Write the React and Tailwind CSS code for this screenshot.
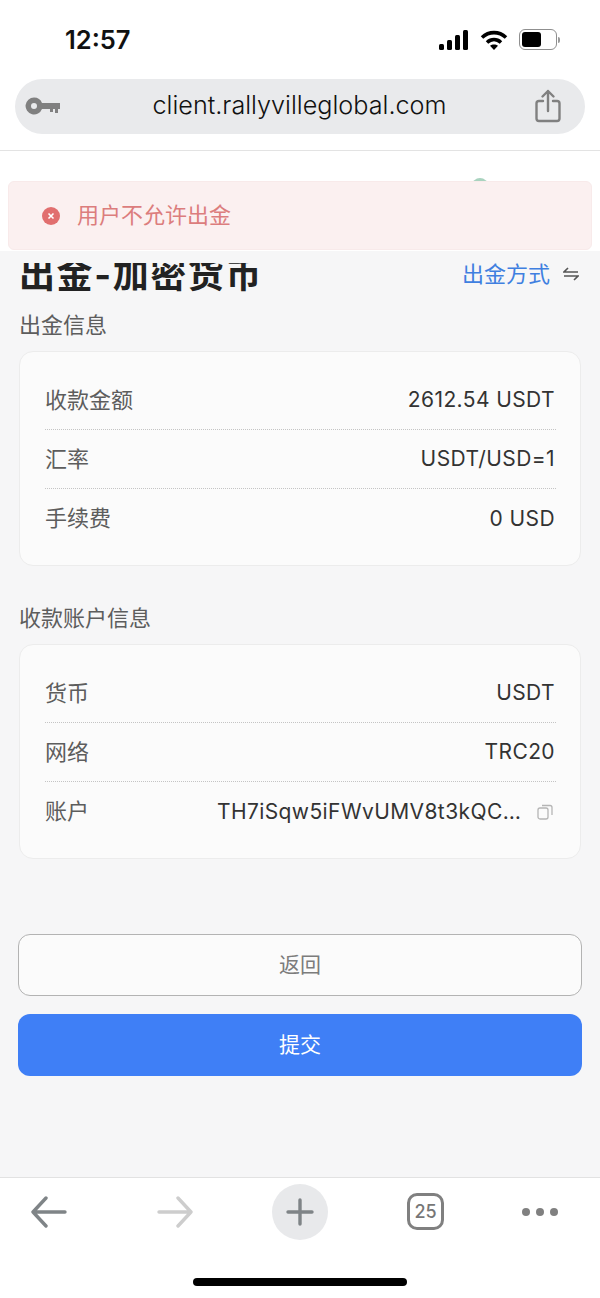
const cjk = { fontFamily: '"Inter", "Noto Sans CJK SC", sans-serif' };

function Row({ label, value, last }) {
  return (
    <div className={`flex h-[59px] items-center justify-between border-dotted border-[#c4c4c4] ${last ? '' : 'border-b'}`}>
      <span className="text-[22px] text-[#5d5d5d]">{label}</span>
      <span className="pr-[1px] text-[21px] tracking-[0.4px] text-[#333]">{value}</span>
    </div>
  );
}

function Card({ children }) {
  return (
    <div className="mt-[10px] rounded-[14px] border border-[#ececec] bg-[#fbfbfb] pl-[25px] pr-[24px] pt-[19px] pb-[17px]">
      {children}
    </div>
  );
}

function StatusBar() {
  return (
    <div className="flex h-[79px] items-start justify-between pl-[65px] pr-[40px] pt-[24px]">
      <span className="text-[25.5px] leading-[32px] font-semibold text-[#111]" style={{ fontFamily: 'Inter, sans-serif' }}>12:57</span>
      <div className="flex items-center gap-[11px] pt-[5px]">
        <svg width="30" height="20" viewBox="0 0 30 20" fill="#000">
          <rect x="0" y="14" width="5" height="6" rx="1.5" />
          <rect x="8" y="10" width="5" height="10" rx="1.5" />
          <rect x="16" y="5" width="5" height="15" rx="1.5" />
          <rect x="24" y="0" width="5" height="20" rx="1.5" />
        </svg>
        <svg width="28" height="20" viewBox="0 0 28 20" fill="none" stroke="#000" strokeWidth="3.6">
          <path d="M2 7.500C9 1 19 1 26 7.500" />
          <path d="M7 12.500c4.200-3.800 9.800-3.800 14 0" />
          <path d="M14 20l-4-4.200c2.200-1.900 5.800-1.900 8 0z" fill="#000" stroke="none" />
        </svg>
        <div className="flex items-center">
          <div className="h-[21px] w-[38px] rounded-[6px] border border-[#8f8f8f] p-[2px]">
            <div className="h-full w-[19px] rounded-[3px] bg-black" />
          </div>
          <div className="ml-[1px] h-[6px] w-[2px] rounded-r bg-[#9a9a9a]" />
        </div>
      </div>
    </div>
  );
}

function AddressBar() {
  return (
    <div className="h-[72px] border-b border-[#e3e3e3]">
      <div className="mx-[15px] flex h-[55px] items-center justify-between rounded-[28px] bg-[#e9eaec] pb-[1px] pl-[10px] pr-[24px]">
        <svg width="36" height="18" viewBox="0 0 36 18" fill="#808080">
          <path fillRule="evenodd" d="M9 0.500a8.500 8.500 0 0 1 8 5.500h18v6h-2v4h-3v-4h-2v3h-3v-3h-8a8.500 8.500 0 1 1-8-11.500zm0 5.500a3 3 0 1 0 0 6 3 3 0 0 0 0-6z" />
        </svg>
        <span className="ml-[3px] text-[25.2px] text-[#111]" style={{ fontFamily: 'Inter, sans-serif', fontWeight: 300 }}>client.rallyvilleglobal.com</span>
        <svg width="26" height="34" viewBox="0 0 26 34" fill="none" stroke="#808080" strokeWidth="2.4" strokeLinecap="round" strokeLinejoin="round">
          <path d="M8 12H4a2.500 2.500 0 0 0-2.500 2.500v15A2.500 2.500 0 0 0 4 32h18a2.500 2.500 0 0 0 2.500-2.500v-15A2.500 2.500 0 0 0 22 12h-4" />
          <path d="M13 22V2M7.500 7.500 13 2l5.500 5.500" />
        </svg>
      </div>
    </div>
  );
}

function BottomBar() {
  return (
    <div className="h-[121px] border-t border-[#e2e2e2] bg-white">
      <div className="flex h-[67px] items-center pl-[31px]">
        <svg width="36" height="32" viewBox="0 0 36 32" fill="none" stroke="#7f8487" strokeWidth="3.4" strokeLinecap="round" strokeLinejoin="round">
          <path d="M2 16h32M15 2 2 16l13 14" />
        </svg>
        <svg className="ml-[90px]" width="36" height="32" viewBox="0 0 36 32" fill="none" stroke="#cdcdcd" strokeWidth="3.4" strokeLinecap="round" strokeLinejoin="round">
          <path d="M2 16h32M21 2l13 14-13 14" />
        </svg>
        <div className="ml-[79px] flex h-[56px] w-[56px] items-center justify-center rounded-full bg-[#e8e9eb]">
          <svg width="28" height="28" viewBox="0 0 28 28" stroke="#7f8487" strokeWidth="3.4" strokeLinecap="round">
            <path d="M14 2v24M2 14h24" />
          </svg>
        </div>
        <div className="ml-[79px] flex h-[37px] w-[37px] items-center justify-center rounded-[10px] border-[3px] border-[#808080] text-[18px] font-medium text-[#777]" style={{ fontFamily: 'Inter, sans-serif' }}>25</div>
        <div className="ml-[78px] flex gap-[6px]">
          <span className="h-[8px] w-[8px] rounded-full bg-[#808080]" />
          <span className="h-[8px] w-[8px] rounded-full bg-[#808080]" />
          <span className="h-[8px] w-[8px] rounded-full bg-[#808080]" />
        </div>
      </div>
      <div className="mx-auto mt-[33px] h-[8px] w-[214px] rounded-full bg-black" />
    </div>
  );
}

export default function App() {
  return (
    <div className="relative flex h-[1298px] w-[600px] flex-col overflow-hidden bg-white" style={cjk}>
      <StatusBar />
      <AddressBar />

      {/* page */}
      <div className="flex flex-1 flex-col bg-[#f6f6f7]">
        <div className="h-[100px] bg-white pt-[27px] pl-[472px]">
          <div className="h-[16px] w-[16px] rounded-full bg-[#a9d3bf]" />
        </div>
        <div className="flex-1 px-[19px] pt-[12px]">
          <div className="flex h-[30px] items-center justify-between">
            {/* top of the title is cut off in the capture */}
            <div className="flex h-[30px] items-end overflow-hidden">
              <h1 className="text-[36px] leading-[36px] font-bold tracking-[1.6px] text-[#222]">出金-加密货币</h1>
            </div>
            <div className="flex items-center gap-[13px] pb-[8px] pr-[2px]">
              <span className="text-[22px] text-[#3f7fe0]">出金方式</span>
              <svg width="16" height="14" viewBox="0 0 16 14" fill="none" stroke="#555" strokeWidth="1.600">
                <path d="M15 5H1l4-4M1 9h14l-4 4" />
              </svg>
            </div>
          </div>
          <div className="mt-[16px] text-[22px] leading-[32px] text-[#5d5d5d]">出金信息</div>
          <Card>
            <Row label="收款金额" value="2612.54 USDT" />
            <Row label="汇率" value="USDT/USD=1" />
            <Row label="手续费" value="0 USD" last />
          </Card>

          <div className="mt-[36px] text-[22px] leading-[32px] text-[#5d5d5d]">收款账户信息</div>
          <Card>
            <Row label="货币" value="USDT" />
            <Row label="网络" value="TRC20" />
            <div className="flex h-[59px] items-center justify-between">
              <span className="text-[22px] text-[#5d5d5d]">账户</span>
              <div className="flex items-center gap-[16px] pr-[3px]">
                <span className="w-[304px] truncate text-right text-[21px] tracking-[0.4px] text-[#333]">TH7iSqw5iFWvUMV8t3kQC...</span>
                <svg width="16" height="16" viewBox="0 0 16 16" fill="none" stroke="#b5b5b5" strokeWidth="1.300">
                  <rect x="1" y="4" width="10" height="11" rx="2" />
                  <path d="M5 1.500h8a2 2 0 0 1 2 2V11" />
                </svg>
              </div>
            </div>
          </Card>

          <button className="-mx-[1px] mt-[75px] flex h-[62px] w-[564px] items-center justify-center rounded-[12px] border border-[#b3b3b3] bg-[#fbfbfb] text-[21px] text-[#7c7c7c]">返回</button>
          <button className="-mx-[1px] mt-[18px] flex h-[62px] w-[564px] items-center justify-center rounded-[12px] bg-[#3f7ff6] text-[21px] text-white">提交</button>
        </div>
      </div>

      <BottomBar />

      {/* toast */}
      <div className="absolute left-[8px] top-[181px] flex h-[69px] w-[584px] items-center gap-[17px] rounded-[6px] border border-[#f8eaea] bg-[#fbf0f0] pl-[33px]">
        <div className="flex h-[18px] w-[18px] items-center justify-center rounded-full bg-[#e16f6f]">
          <svg width="8" height="8" viewBox="0 0 8 8" stroke="#fff" strokeWidth="1.600">
            <path d="M1.500 1.500l5 5M6.500 1.500l-5 5" />
          </svg>
        </div>
        <span className="text-[22px] text-[#dc7d7d]">用户不允许出金</span>
      </div>
    </div>
  );
}
